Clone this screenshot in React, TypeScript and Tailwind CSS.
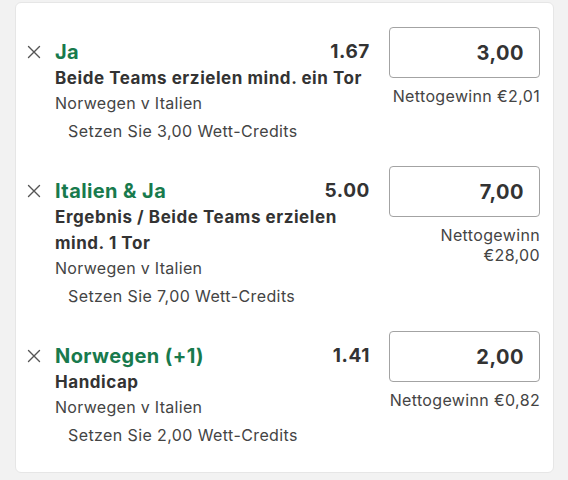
import React from "react";

type Bet = {
  title: string;
  market: React.ReactNode;
  event: string;
  odds: string;
  stake: string;
  win: React.ReactNode;
};

const bets: Bet[] = [
  {
    title: "Ja",
    market: <span className="whitespace-nowrap">Beide Teams erzielen mind. ein Tor</span>,
    event: "Norwegen v Italien",
    odds: "1.67",
    stake: "3,00",
    win: <span className="whitespace-nowrap">Nettogewinn €2,01</span>,
  },
  {
    title: "Italien & Ja",
    market: (
      <>
        Ergebnis / Beide Teams erzielen
        <br />
        mind. 1 Tor
      </>
    ),
    event: "Norwegen v Italien",
    odds: "5.00",
    stake: "7,00",
    win: (
      <>
        Nettogewinn
        <br />
        €28,00
      </>
    ),
  },
  {
    title: "Norwegen (+1)",
    market: "Handicap",
    event: "Norwegen v Italien",
    odds: "1.41",
    stake: "2,00",
    win: <span className="whitespace-nowrap">Nettogewinn €0,82</span>,
  },
];

function CloseIcon() {
  return (
    <svg width="14" height="14" viewBox="0 0 14 14" fill="none">
      <path d="M1.5 1.5 L12.5 12.5 M12.5 1.5 L1.5 12.5" stroke="#555" strokeWidth="1.4" strokeLinecap="round" />
    </svg>
  );
}

function BetRow({ bet }: { bet: Bet }) {
  return (
    <div className="flex">
      <div className="w-[39px] shrink-0 pl-[11px] h-[26px] flex items-center">
        <CloseIcon />
      </div>
      <div className="w-[315px] shrink-0">
        <div className="flex items-center justify-between h-[26px]">
          <span className="text-[20px] font-bold text-[#187a4d] leading-[26px] tracking-[0.4px]">{bet.title}</span>
          <span className="text-[19px] font-bold text-[#333] leading-[26px] tracking-[0.6px]">{bet.odds}</span>
        </div>
        <div className="text-[17px] font-bold text-[#333] leading-[26px] tracking-[0.55px]">{bet.market}</div>
        <div className="text-[16px] text-[#444] leading-[24px] tracking-[0.3px]">{bet.event}</div>
        <div className="mt-[4px] pl-[13px] text-[16px] text-[#444] leading-[24px] tracking-[0.4px]">
          Setzen Sie {bet.stake} Wett-Credits
        </div>
      </div>
      <div className="ml-[19px] w-[151px] shrink-0 -mt-[12px] flex flex-col items-end">
        <div className="w-[151px] h-[51px] rounded-[4px] border-[1.5px] border-[#a3a3a3] flex items-center justify-end pr-[15px] text-[20px] font-bold text-[#333] tracking-[0.5px]">
          {bet.stake}
        </div>
        <div className="mt-[8px] text-[16px] text-[#444] leading-[20px] text-right tracking-[0.35px]">{bet.win}</div>
      </div>
    </div>
  );
}

export default function App() {
  return (
    <div
      className="w-[568px] h-[480px] bg-[#f2f2f2] pt-[2px] pl-[15px] overflow-hidden"
      style={{ fontFamily: "Inter, 'Noto Sans', sans-serif" }}
    >
      <div className="w-[539px] bg-white rounded-[6px] border border-[#e6e6e6] pt-[36px] pb-[25px] flex flex-col gap-[35px]">
        {bets.map((b, i) => (
          <BetRow key={i} bet={b} />
        ))}
      </div>
    </div>
  );
}
